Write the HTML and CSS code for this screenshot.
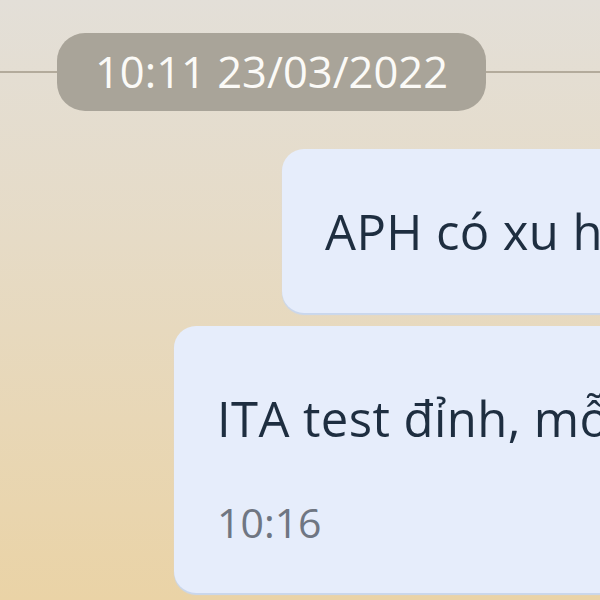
FILE: index.html
```html
<!DOCTYPE html>
<html lang="vi">

<head>
    <meta charset="utf-8">
    <meta name="viewport" content="width=device-width, initial-scale=1.0">
    <title>Chat</title>
    <link rel="stylesheet" href="styles.css">
</head>

<body>
    <div class="chat">
        <div class="day-divider">
            <span class="day-label">10:11 23/03/2022</span>
        </div>

        <div class="bubble bubble-first">
            <p class="bubble-text">APH có xu hướng tăng giá mạnh</p>
        </div>

        <div class="bubble bubble-last">
            <p class="bubble-text">ITA test đỉnh, mỗi lần chạm là bán</p>
            <span class="bubble-time">10:16</span>
        </div>
    </div>
</body>

</html>
```

FILE: styles.css
```css
html,
body {
    margin: 0;
    height: 100%;
}

body {
    background: linear-gradient(to bottom, #e3dfd8 0%, #e6dbc6 40%, #ead3a6 100%);
    font-family: 'Open Sans', 'Noto Sans', sans-serif;
    overflow: hidden;
}

.chat {
    display: flex;
    flex-direction: column;
    align-items: flex-start;
    padding-top: 33px;
}

.day-divider {
    align-self: stretch;
    display: flex;
    align-items: center;
    padding-left: 57px;
    background: linear-gradient(#b3ab9c, #b3ab9c) center / 100% 2px no-repeat;
}

.day-label {
    background: #a9a499;
    color: #fbfaf7;
    font-size: 43.5px;
    line-height: 78px;
    height: 78px;
    padding: 0 38px;
    border-radius: 28px;
}

.bubble {
    background: #e6edfb;
    border-radius: 22px;
    box-shadow: 0 2px 1px #c9d7ee;
    padding: 0 43px;
    white-space: nowrap;
    box-sizing: border-box;
    width: 700px;
}

.bubble-first {
    margin-top: 38px;
    margin-left: 282px;
    height: 164px;
    padding-top: 47px;
}

.bubble-last {
    margin-top: 13px;
    margin-left: 174px;
    height: 267px;
    padding-top: 57px;
}

.bubble-text {
    margin: 0;
    color: #1e2e40;
    font-size: 49px;
    letter-spacing: 0.4px;
    line-height: 70px;
}

.bubble-time {
    display: block;
    margin-top: 40px;
    color: #6f7682;
    font-size: 41px;
    line-height: 58px;
}
```
